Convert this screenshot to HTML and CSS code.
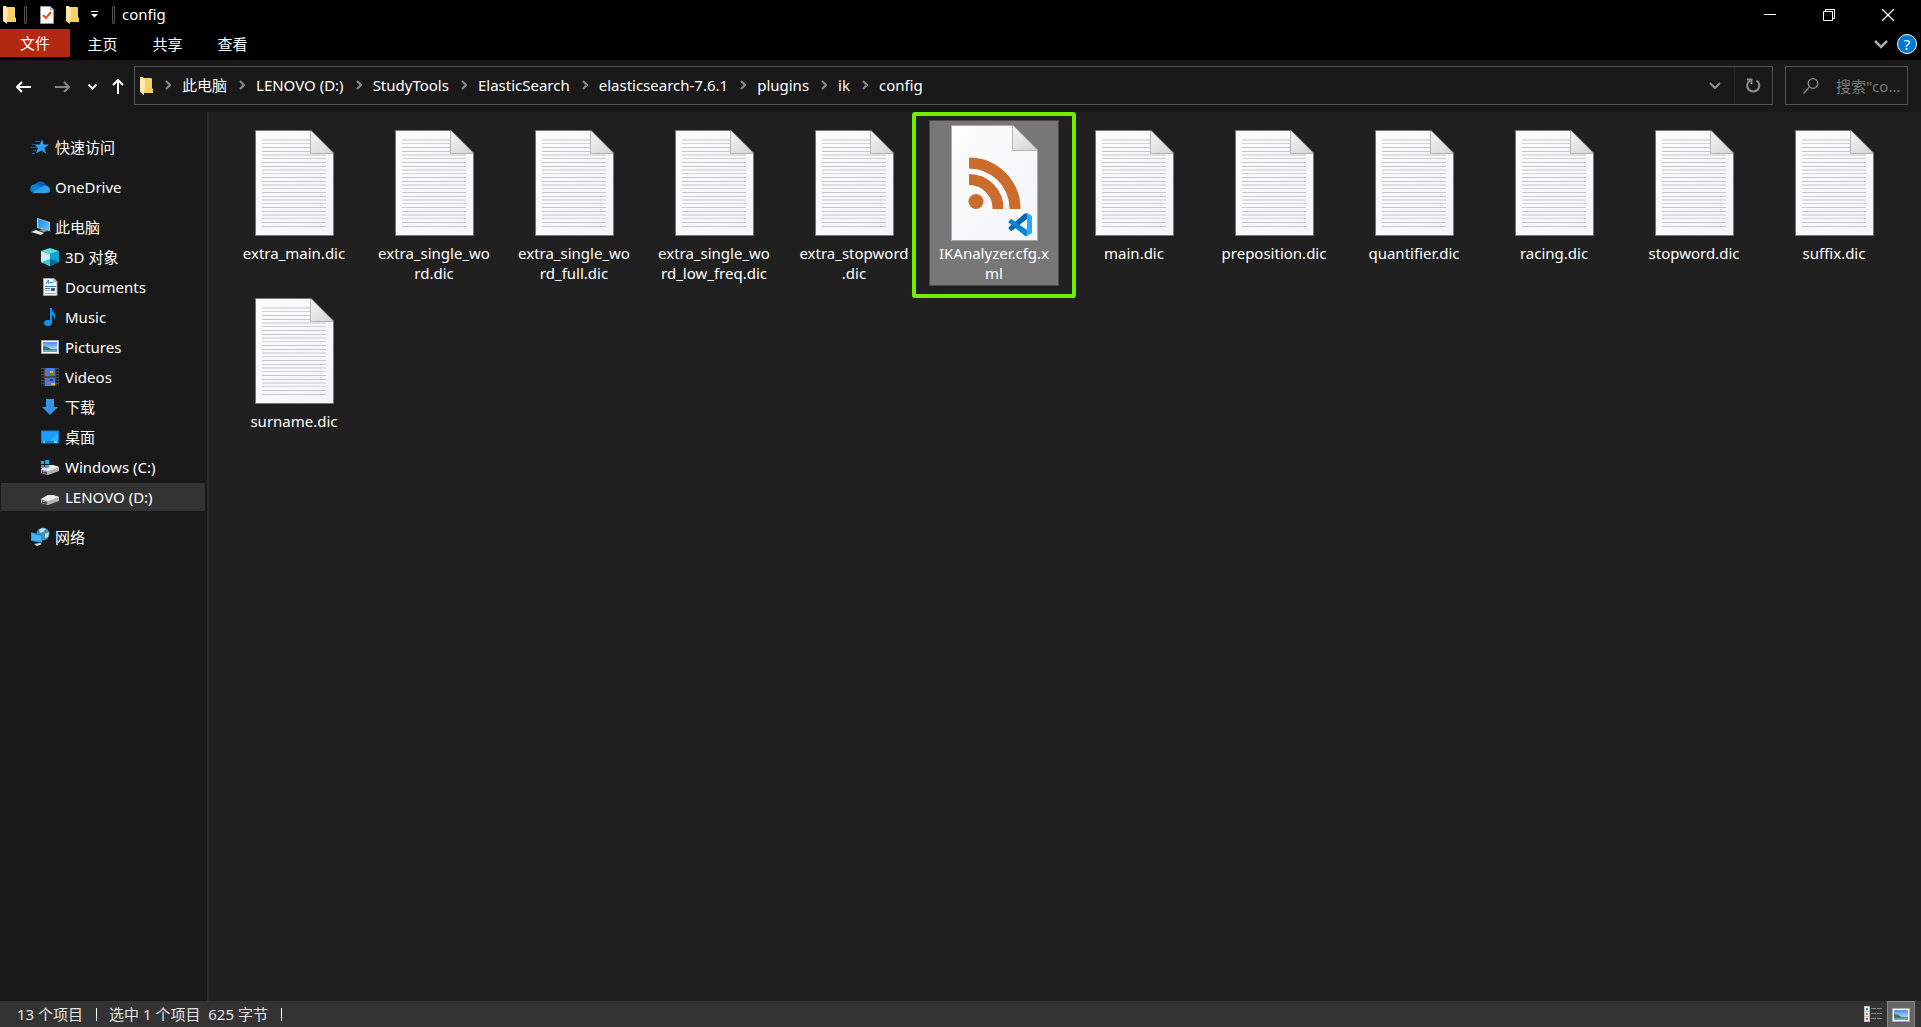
FILE: index.html
```html
<!DOCTYPE html>
<html lang="zh-CN">
<head>
    <meta charset="UTF-8">
    <meta name="viewport" content="width=device-width, initial-scale=1.0">
    <title>config</title>
    <link rel="stylesheet" href="styles.css">
</head>
<body>
    <!-- Shared icons -->
    <svg class="defs" width="0" height="0" aria-hidden="true">
        <defs>
            <linearGradient id="paper" x1="0" y1="0" x2="1" y2="1">
                <stop offset="0" stop-color="#fdfdfd"/>
                <stop offset="1" stop-color="#f3f4f7"/>
            </linearGradient>
            <linearGradient id="fold" x1="0" y1="0" x2="1" y2="1">
                <stop offset="0" stop-color="#f4f4f4"/>
                <stop offset="1" stop-color="#d2d2d2"/>
            </linearGradient>
            <linearGradient id="sky" x1="0" y1="0" x2="0" y2="1">
                <stop offset="0" stop-color="#4a8fe8"/>
                <stop offset="1" stop-color="#d8ecfb"/>
            </linearGradient>
            <linearGradient id="screen" x1="0" y1="0" x2="1" y2="1">
                <stop offset="0" stop-color="#1b8fe8"/>
                <stop offset="1" stop-color="#5cc0ff"/>
            </linearGradient>
            <pattern id="lines" x="0" y="9" width="78" height="15" patternUnits="userSpaceOnUse">
                <rect y="0" width="78" height="2" fill="#dfe0e1"/>
                <rect y="4" width="78" height="1" fill="#d2d3d4"/>
                <rect y="8" width="78" height="1" fill="#c6c7c8"/>
                <rect y="12" width="78" height="1" fill="#c6c7c8"/>
            </pattern>
            <symbol id="dic" viewBox="0 0 79 106">
                <path d="M0.500 .5H56L78.500 23V105.500H.5Z" fill="url(#paper)" stroke="#777"/>
                <path d="M7 9H55V24H71V98H7Z" fill="url(#lines)"/>
                <path d="M56 1L78 23H56Z" fill="url(#fold)"/>
                <path d="M55.500 1V23.500H78" fill="none" stroke="#b5b5b5"/>
            </symbol>
            <symbol id="folder" viewBox="0 0 13 18">
                <path d="M3 1H11Q12 1 12 2V11L13 12V16H3Z" fill="#f5cf68"/>
                <path d="M0 0H3L5 3V11L4 12V18L0 15Z" fill="#ffe9a8"/>
            </symbol>
            <symbol id="drive" viewBox="0 0 18 10">
                <path d="M0 4L7 0H12L18 2V6L7 10L0 8Z" fill="#b4b4b8"/>
                <path d="M0 4L7 0H12L18 2L7 6Z" fill="#ececee"/>
                <path d="M1 5L6 7V9L1 8Z" fill="#44484a"/>
                <path d="M2 6H4V7H2Z" fill="#5ed05e"/>
            </symbol>
            <symbol id="chevron" viewBox="0 0 6 10">
                <path d="M1 1L5 5L1 9" fill="none" stroke="#8a8a8a" stroke-width="2"/>
            </symbol>
            <symbol id="photo" viewBox="0 0 18 14">
                <path d="M0 0H18V14H0Z" fill="#a9a9a9"/>
                <path d="M1 1H17V13H1Z" fill="#fff"/>
                <path d="M2 2H16V12H2Z" fill="url(#sky)"/>
                <path d="M2 6Q6 6 8 8T16 9V10H2Z" fill="#3c7a63"/>
                <path d="M2 10H16V12H2Z" fill="#6f9fc0"/>
            </symbol>
        </defs>
    </svg>

    <header class="titlebar">
        <div class="quick">
            <svg width="13" height="18"><use href="#folder"/></svg>
            <span class="divider"></span>
            <button class="quick-btn" aria-label="属性">
                <svg width="14" height="18" viewBox="0 0 14 18">
                    <path d="M.5 .5H10.500L13.500 3.500V17.500H.5Z" fill="#f8f8f8" stroke="#999"/>
                    <path d="M10.500 .5V3.500H13.500" fill="none" stroke="#999"/>
                    <path d="M3 9L6 12L11 6" fill="none" stroke="#e8511c" stroke-width="2"/>
                </svg>
            </button>
            <button class="quick-btn" aria-label="新建文件夹"><svg width="13" height="18"><use href="#folder"/></svg></button>
            <button class="quick-btn" aria-label="自定义快速访问工具栏">
                <svg width="7" height="7" viewBox="0 0 7 7"><path d="M0 0H7V1H0ZM0 3H7L3.500 6.500Z" fill="#fff"/></svg>
            </button>
            <span class="divider"></span>
        </div>
        <h1 class="title">config</h1>
        <div class="window-buttons">
            <button aria-label="最小化"><svg width="12" height="12" viewBox="0 0 12 12"><path d="M0 5.500H12" stroke="#fff"/></svg></button>
            <button aria-label="还原">
                <svg width="12" height="12" viewBox="0 0 12 12" fill="none" stroke="#fff"><path d="M.5 2.500H9.500V11.500H.5ZM2.500 2.500V.5H11.500V9.500H9.500"/></svg>
            </button>
            <button aria-label="关闭"><svg width="12" height="12" viewBox="0 0 12 12"><path d="M0 0L12 12M12 0L0 12" stroke="#fff" stroke-width="1.300"/></svg></button>
        </div>
    </header>

    <nav class="ribbon" aria-label="功能区">
        <button class="tab file">文件</button>
        <button class="tab">主页</button>
        <button class="tab">共享</button>
        <button class="tab">查看</button>
        <div class="ribbon-end">
            <button aria-label="展开功能区"><svg width="14" height="9" viewBox="0 0 14 9"><path d="M1 1L7 7L13 1" fill="none" stroke="#aaa" stroke-width="2.500"/></svg></button>
            <button class="help" aria-label="帮助">?</button>
        </div>
    </nav>

    <div class="toolbar">
        <div class="nav-buttons">
            <button aria-label="后退"><svg width="15" height="12" viewBox="0 0 15 12"><path d="M15 6H1M6 1L1 6L6 11" fill="none" stroke="#fff" stroke-width="2"/></svg></button>
            <button aria-label="前进"><svg width="15" height="12" viewBox="0 0 15 12"><path d="M0 6H14M9 1L14 6L9 11" fill="none" stroke="#828282" stroke-width="2"/></svg></button>
            <button class="narrow" aria-label="最近浏览的位置"><svg width="9" height="6" viewBox="0 0 9 6"><path d="M.5 .5L4.500 4.500L8.500 .5" fill="none" stroke="#e8e8e8" stroke-width="2"/></svg></button>
            <button class="up" aria-label="上移"><svg width="12" height="15" viewBox="0 0 12 15"><path d="M6 15V1M1 6L6 1L11 6" fill="none" stroke="#fff" stroke-width="2"/></svg></button>
        </div>
        <div class="address">
            <svg class="address-icon" width="13" height="18"><use href="#folder"/></svg>
            <ol class="crumbs">
                <li><svg width="6" height="10"><use href="#chevron"/></svg><a href="#">此电脑</a></li>
                <li><svg width="6" height="10"><use href="#chevron"/></svg><a href="#">LENOVO (D:)</a></li>
                <li><svg width="6" height="10"><use href="#chevron"/></svg><a href="#">StudyTools</a></li>
                <li><svg width="6" height="10"><use href="#chevron"/></svg><a href="#">ElasticSearch</a></li>
                <li><svg width="6" height="10"><use href="#chevron"/></svg><a href="#">elasticsearch-7.6.1</a></li>
                <li><svg width="6" height="10"><use href="#chevron"/></svg><a href="#">plugins</a></li>
                <li><svg width="6" height="10"><use href="#chevron"/></svg><a href="#">ik</a></li>
                <li><svg width="6" height="10"><use href="#chevron"/></svg><a href="#">config</a></li>
            </ol>
            <button class="address-btn" aria-label="以前的位置"><svg width="12" height="8" viewBox="0 0 12 8"><path d="M1 1L6 6L11 1" fill="none" stroke="#909090" stroke-width="2"/></svg></button>
            <button class="address-btn refresh" aria-label="刷新">
                <svg width="15" height="15" viewBox="0 0 15 15" fill="none" stroke="#909090" stroke-width="2"><path d="M10.500 2.500A6 6 0 1 1 4 2.500"/><path d="M1 1.500H5.500V6"/></svg>
            </button>
        </div>
        <label class="search">
            <svg width="16" height="16" viewBox="0 0 16 16" fill="none" stroke="#8a8a8a" stroke-width="1.300"><circle cx="10" cy="5.500" r="4.800"/><path d="M6.500 9L.5 15.500"/></svg>
            <input type="text" placeholder='搜索"config"' aria-label="搜索">
        </label>
    </div>

    <div class="main">
        <nav class="sidebar" aria-label="导航窗格">
            <div class="group">
                <a href="#" class="row">
                    <svg width="20" height="20" viewBox="0 0 20 20"><path d="M12 2L13.500 7.500H19L14.500 11L16 16.500L11.500 13.500L6 16.500L8 11L4.500 7.500H10Z" fill="#2fa4f5"/><path d="M5 4.500H10M2 7.500H6M1 10.500H7M3 13.500H6M2 16.500H5" stroke="#1d5c8a"/></svg>
                    <span>快速访问</span>
                </a>
            </div>
            <div class="group">
                <a href="#" class="row">
                    <svg width="20" height="20" viewBox="0 0 20 20"><path d="M5 8A6 6 0 0 1 16 8L18 12L5 14Z" fill="#0a63b8"/><path d="M4 7.500Q7 6 10 9L16 13L6 16H4A4.300 4.300 0 0 1 4 7.500Z" fill="#1080d8"/><path d="M3 15L13 9.500Q15 7.500 17.500 9Q20 10.500 20 12.500Q20 16 16.500 16H5Q3.500 16 3 15Z" fill="#2aa5ec"/></svg>
                    <span>OneDrive</span>
                </a>
            </div>
            <div class="group">
                <a href="#" class="row">
                    <svg width="20" height="20" viewBox="0 0 20 20"><path d="M7 1L20 5V14L7 11Z" fill="#c3d1dc"/><path d="M8 2L19 5.500V13L8 10.500Z" fill="url(#screen)"/><path d="M9 13L14 12L18 14L13 15Z" fill="#8d99a5"/><path d="M1 15L6 13L14 16L11 18Z" fill="#e4e6ea"/></svg>
                    <span>此电脑</span>
                </a>
                <a href="#" class="row child">
                    <svg width="18" height="18" viewBox="0 0 18 18"><path d="M0 3L9 6V18L0 14Z" fill="#c9f3f3"/><path d="M18 3L9 6V18L18 14Z" fill="#0ea5cf"/><path d="M0 3L9 0L18 3L9 6Z" fill="#5fdbe6"/><path d="M0 14L9 11V18Z" fill="#35c8d6"/><path d="M18 14L9 11V18Z" fill="#066a92"/></svg>
                    <span>3D 对象</span>
                </a>
                <a href="#" class="row child">
                    <svg width="18" height="18" viewBox="0 0 18 18"><path d="M2.500 .5H13L16 3.500V17.500H2.500Z" fill="#fafafa" stroke="#a0a0a0"/><path d="M13 .5V3.500H16" fill="none" stroke="#a0a0a0"/><path d="M5 6L7.500 2L8 6M9 4.500H12M4 8.500H15M4 10.500H9" fill="none" stroke="#1c7fc4"/><path d="M4 12.500H9M4 15.500H15" stroke="#a8a8a8"/><path d="M10 10H14V13H10Z" fill="#2d6188"/></svg>
                    <span>Documents</span>
                </a>
                <a href="#" class="row child">
                    <svg width="18" height="18" viewBox="0 0 18 18"><ellipse cx="7" cy="15" rx="4" ry="3" fill="#0a96f5"/><path d="M9 0H11Q11 3 13 5Q16 8 13 12Q14 8 11 7V15H9Z" fill="#0a96f5"/></svg>
                    <span>Music</span>
                </a>
                <a href="#" class="row child">
                    <svg width="18" height="14"><use href="#photo"/></svg>
                    <span>Pictures</span>
                </a>
                <a href="#" class="row child">
                    <svg width="18" height="18" viewBox="0 0 18 18"><path d="M0 0H18V18H0Z" fill="#464646"/><path d="M4 0H14V8H4ZM4 10H14V18H4Z" fill="#3f7be0"/><path d="M1.500 1V18M16.500 1V18" stroke="#111" stroke-width="2" stroke-dasharray="2 1"/><path d="M9 3H12V5H9ZM10 15H14V17H10Z" fill="#f0b51c"/><path d="M8 5H13V8H8Z" fill="#6f7b26"/><path d="M5 6H7V8H5ZM6 14H8V16H6Z" fill="#c65668"/><path d="M9 11H12V13H9Z" fill="#273e5e"/></svg>
                    <span>Videos</span>
                </a>
                <a href="#" class="row child">
                    <svg width="18" height="18" viewBox="0 0 18 18"><path d="M5 1H13V9H17L9 17L1 9H5Z" fill="#3593e6"/></svg>
                    <span>下载</span>
                </a>
                <a href="#" class="row child">
                    <svg width="18" height="14" viewBox="0 0 18 14"><path d="M0 .5H18V13.500H0Z" fill="#0a84d8"/><path d="M1 1.500H17V11H1Z" fill="#1a9dfb"/><path d="M9 11L17 3V11Z" fill="#35b0ff"/><path d="M2 12H4M13 12H16" stroke="#fff"/></svg>
                    <span>桌面</span>
                </a>
                <a href="#" class="row child">
                    <svg width="18" height="18" viewBox="0 0 18 18"><use href="#drive" y="7" width="18" height="10"/><path d="M0 3H3V6H0ZM4 2H8V6H4ZM0 7H3V10H0ZM4 7H8V10H4Z" fill="#12b2f5"/></svg>
                    <span>Windows (C:)</span>
                </a>
                <a href="#" class="row child active" aria-current="true">
                    <svg width="18" height="18" viewBox="0 0 18 18"><use href="#drive" y="7" width="18" height="10"/></svg>
                    <span>LENOVO (D:)</span>
                </a>
            </div>
            <div class="group">
                <a href="#" class="row">
                    <svg width="20" height="20" viewBox="0 0 20 20"><circle cx="13" cy="7" r="6.500" fill="#4490b3"/><path d="M9 3Q12 0 16 2L13 5L10 6ZM15 7L19 5L18 10L15 11Z" fill="#b5dcea"/><path d="M1 5L12 8V16L1 14Z" fill="#1c7fcf"/><path d="M1.500 6L11.500 9V15L1.500 13Z" fill="#45b5fb"/><path d="M4 17L10 16L12 17L7 19Z" fill="#d4d8dc"/></svg>
                    <span>网络</span>
                </a>
            </div>
        </nav>

        <main class="files">
            <button class="item"><span class="thumb"><svg width="79" height="106"><use href="#dic"/></svg></span><span class="name">extra_main.dic</span></button>
            <button class="item"><span class="thumb"><svg width="79" height="106"><use href="#dic"/></svg></span><span class="name">extra_single_word.dic</span></button>
            <button class="item"><span class="thumb"><svg width="79" height="106"><use href="#dic"/></svg></span><span class="name">extra_single_word_full.dic</span></button>
            <button class="item"><span class="thumb"><svg width="79" height="106"><use href="#dic"/></svg></span><span class="name">extra_single_word_low_freq.dic</span></button>
            <button class="item"><span class="thumb"><svg width="79" height="106"><use href="#dic"/></svg></span><span class="name">extra_stopword<wbr>.dic</span></button>
            <button class="item selected">
                <span class="thumb">
                    <svg width="87" height="116" viewBox="0 0 87 116">
                        <path d="M.5 .5H62L86.500 25V115.500H.5Z" fill="url(#paper)" stroke="#aaa"/>
                        <path d="M62 1L86 25H62Z" fill="url(#fold)"/>
                        <path d="M61.500 1V25.500H86" fill="none" stroke="#b5b5b5"/>
                        <circle cx="25" cy="76.500" r="7.500" fill="#cb6c2c"/>
                        <path d="M18 54.500A29 29 0 0 1 47 84" fill="none" stroke="#cb6c2c" stroke-width="11"/>
                        <path d="M18 38A46 46 0 0 1 64 84" fill="none" stroke="#cb6c2c" stroke-width="11"/>
                        <path d="M58 104L60 106Q61 106 62 105L76 94V88Q74 88 73 89L58 102Q57 103 58 104Z" fill="#0569ab"/>
                        <path d="M58 96L60 94Q61 94 62 95L76 105V111Q74 112 73 110L58 98Q57 97 58 96Z" fill="#0a84d0"/>
                        <path d="M74 111Q76 110 76 108V91Q76 89 74 88H76L81 91V108L76 111Z" fill="#27aaf3"/>
                    </svg>
                </span>
                <span class="name">IKAnalyzer.cfg.xml</span>
            </button>
            <button class="item"><span class="thumb"><svg width="79" height="106"><use href="#dic"/></svg></span><span class="name">main.dic</span></button>
            <button class="item"><span class="thumb"><svg width="79" height="106"><use href="#dic"/></svg></span><span class="name">preposition.dic</span></button>
            <button class="item"><span class="thumb"><svg width="79" height="106"><use href="#dic"/></svg></span><span class="name">quantifier.dic</span></button>
            <button class="item"><span class="thumb"><svg width="79" height="106"><use href="#dic"/></svg></span><span class="name">racing.dic</span></button>
            <button class="item"><span class="thumb"><svg width="79" height="106"><use href="#dic"/></svg></span><span class="name">stopword.dic</span></button>
            <button class="item"><span class="thumb"><svg width="79" height="106"><use href="#dic"/></svg></span><span class="name">suffix.dic</span></button>
            <button class="item"><span class="thumb"><svg width="79" height="106"><use href="#dic"/></svg></span><span class="name">surname.dic</span></button>
        </main>
    </div>

    <footer class="status">
        <span class="status-text">13 个项目</span>
        <span class="status-text">选中 1 个项目&nbsp; 625 字节</span>
        <div class="views">
            <button class="view" aria-label="详细信息">
                <svg width="18" height="16" viewBox="0 0 18 16"><path d="M0 0H6V16H0Z" fill="#bbb"/><path d="M1 1H5V5H1ZM1 6H5V10H1ZM1 11H5V15H1Z" fill="#fff"/><path d="M2 2H4V4H2Z" fill="#2d79b5"/><path d="M2 7H4V9H2Z" fill="#8a8a3a"/><path d="M2 12H4V14H2Z" fill="#c0392b"/><path d="M7 2.500H12M13 2.500H18M7 7.500H12M13 7.500H18M7 12.500H12M13 12.500H18" stroke="#888"/></svg>
            </button>
            <button class="view on" aria-label="大缩略图"><svg width="18" height="14"><use href="#photo"/></svg></button>
        </div>
    </footer>
</body>
</html>
```

FILE: styles.css
```css
* { margin: 0; padding: 0; box-sizing: border-box; }
body { display: flex; flex-direction: column; min-height: 100vh; background: #191919; color: #fff; font-family: "Noto Sans", "Noto Sans CJK SC", sans-serif; font-size: 15px; line-height: 20px; }
button { background: none; border: none; color: inherit; font: inherit; cursor: pointer; }
a { color: inherit; text-decoration: none; }
svg { display: block; flex: none; }
.defs { position: absolute; }

/* Title bar */
.titlebar { display: flex; align-items: center; height: 29px; background: #000; }
.quick { display: flex; align-items: center; padding-left: 3px; }
.divider { width: 3px; height: 18px; margin: 0 7px 0 8px; border: 1px solid #555; border-radius: 1px; }
.quick-btn { display: flex; padding: 0 6px; }
.title { padding-bottom: 2px; font-size: 15px; font-weight: 400; }
.window-buttons { display: flex; margin-left: auto; padding-right: 4px; }
.window-buttons button { display: flex; align-items: center; justify-content: center; width: 59px; height: 28px; }
.window-buttons button:hover { background: #333; }

/* Ribbon tabs */
.ribbon { display: flex; align-items: flex-start; height: 31px; background: #000; }
.tab { width: 65px; height: 30px; }
.file { width: 70px; height: 28px; background: #b32810; }
.ribbon-end { display: flex; align-items: center; gap: 9px; margin-left: auto; padding: 5px 4px 0 0; }
.help { width: 20px; height: 20px; border: 1px solid #fff; border-radius: 50%; background: #0078d7; line-height: 18px; }

/* Address bar */
.toolbar { display: flex; height: 52px; padding: 6px 13px 7px 4px; }
.nav-buttons { display: flex; align-items: center; flex: none; width: 130px; }
.nav-buttons button { display: flex; justify-content: center; width: 39px; padding-top: 2px; }
.nav-buttons .narrow { width: 21px; }
.nav-buttons .up { width: 30px; }
.address { display: flex; flex: 1; align-items: center; min-width: 0; border: 1px solid #535353; }
.address-icon { margin-left: 5px; }
.crumbs { display: flex; flex: 1; padding-bottom: 2px; list-style: none; }
.crumbs li { display: flex; align-items: center; gap: 11px; padding-left: 12px; }
.address-btn { display: flex; align-items: center; justify-content: center; width: 38px; height: 37px; }
.refresh { border-left: 1px solid #222; }
.search { display: flex; align-items: center; gap: 17px; width: 123px; margin-left: 12px; padding: 0 4px 0 17px; border: 1px solid #535353; }
.search input { width: 100%; min-width: 0; background: none; border: none; outline: none; color: #fff; font: inherit; text-overflow: ellipsis; }
.search input::placeholder { color: #7a7a7a; }

/* Navigation pane */
.main { display: flex; flex: 1; }
.sidebar { display: flex; flex-direction: column; gap: 12px; width: 209px; padding: 21px 2px 20px 1px; border-right: 2px solid #2b2b2b; flex: none; }
.group { display: flex; flex-direction: column; gap: 2px; }
.row { display: flex; align-items: center; gap: 5px; height: 28px; padding-left: 29px; }
.child { gap: 6px; padding-left: 40px; }
.row:hover { background: #2a2a2a; }
.row.active { background: #333; }

/* File grid */
.files { display: grid; flex: 1; grid-template-columns: repeat(auto-fill, 130px); align-content: start; gap: 2px 10px; padding: 8px 12px 8px 20px; background: #202020; }
.item { display: flex; flex-direction: column; align-items: center; min-height: 166px; padding: 2px 6px; border: 1px solid transparent; }
.item:hover { background: #333; }
.thumb { display: flex; align-items: center; height: 120px; }
.name { width: 116px; text-align: center; overflow-wrap: anywhere; }
.item.selected { position: relative; background: #777; border-color: #4a4a4a; }
.item.selected::after { content: ""; position: absolute; inset: -9px -18px -13px; border: 4px solid #70ee00; border-radius: 3px; }

/* Status bar */
.status { display: flex; align-items: center; height: 26px; padding: 0 6px 0 17px; background: #333; color: #e4e4e4; }
.status-text { display: flex; align-items: center; margin-right: 12px; }
.status-text::after { content: ""; width: 1px; height: 13px; margin-left: 13px; background: #fff; }
.views { display: flex; margin-left: auto; }
.view { display: flex; align-items: center; justify-content: center; width: 28px; height: 26px; }
.view.on { background: #666; border: 1px solid #8a8a8a; border-bottom: none; }
```
